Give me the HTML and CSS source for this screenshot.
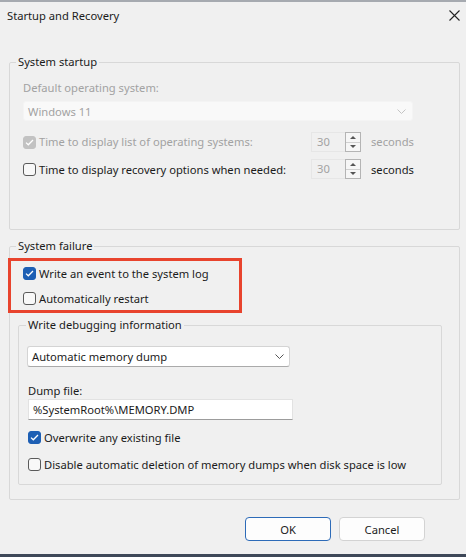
FILE: index.html
```html
<!DOCTYPE html>
<html>
<head>
    <title>Startup and Recovery</title>
    <link rel="stylesheet" href="styles.css">
</head>
<body>
    <div class="window">
        <div class="edge-top"></div>
        <div class="titlebar">
            <span>Startup and Recovery</span>
            <svg class="close" width="11" height="11" viewBox="0 0 11 11">
                <path d="M0.5 0.5 L10.5 10.5 M10.5 0.5 L0.5 10.5" stroke="#222" stroke-width="1.1" fill="none"/>
            </svg>
        </div>

        <div class="content">
            <fieldset class="group startup">
                <legend>System startup</legend>
                <div class="muted">Default operating system:</div>
                <div class="combo disabled">
                    <span>Windows 11</span>
                    <svg width="9" height="5" viewBox="0 0 9 5"><path d="M0.5 0.5 L4.5 4.5 L8.5 0.5" stroke="#c4c4c4" fill="none"/></svg>
                </div>
                <div class="spin-row first">
                    <label class="check muted">
                        <span class="box checked disabled"><svg width="9" height="7" viewBox="0 0 9 7"><path d="M1 3.6 L3.3 5.8 L8 1" stroke="#fff" stroke-width="1.3" fill="none"/></svg></span>
                        Time to display list of operating systems:
                    </label>
                    <span class="spin-value muted">30</span>
                    <span class="spin-buttons">
                        <span class="up"></span>
                        <span class="down"></span>
                    </span>
                    <span class="unit muted">seconds</span>
                </div>
                <div class="spin-row">
                    <label class="check">
                        <span class="box"></span>
                        Time to display recovery options when needed:
                    </label>
                    <span class="spin-value muted">30</span>
                    <span class="spin-buttons">
                        <span class="up"></span>
                        <span class="down"></span>
                    </span>
                    <span class="unit">seconds</span>
                </div>
            </fieldset>

            <fieldset class="group failure">
                <legend>System failure</legend>
                <label class="check row">
                    <span class="box checked"><svg width="9" height="7" viewBox="0 0 9 7"><path d="M1 3.6 L3.3 5.8 L8 1" stroke="#fff" stroke-width="1.3" fill="none"/></svg></span>
                    Write an event to the system log
                </label>
                <label class="check row second">
                    <span class="box"></span>
                    Automatically restart
                </label>

                <fieldset class="group debug">
                    <legend>Write debugging information</legend>
                    <div class="combo">
                        <span>Automatic memory dump</span>
                        <svg width="9" height="5" viewBox="0 0 9 5"><path d="M0.5 0.5 L4.5 4.5 L8.5 0.5" stroke="#555" fill="none"/></svg>
                    </div>
                    <div class="field-label">Dump file:</div>
                    <div class="textbox">%SystemRoot%\MEMORY.DMP</div>
                    <label class="check row overwrite">
                        <span class="box checked"><svg width="9" height="7" viewBox="0 0 9 7"><path d="M1 3.6 L3.3 5.8 L8 1" stroke="#fff" stroke-width="1.3" fill="none"/></svg></span>
                        Overwrite any existing file
                    </label>
                    <label class="check row second">
                        <span class="box"></span>
                        Disable automatic deletion of memory dumps when disk space is low
                    </label>
                </fieldset>
            </fieldset>

            <div class="actions">
                <button class="btn default">OK</button>
                <button class="btn">Cancel</button>
            </div>
        </div>

        <div class="edge-bottom"></div>

        <!-- highlight around the system log / restart options -->
        <div class="mark"></div>
    </div>
</body>
</html>
```

FILE: styles.css
```css
body { margin: 0; background: #f0f0f0; font-family: "Noto Sans", sans-serif; font-size: 11.2px; color: #1b1b1b; }
.window { position: relative; height: 557px; display: flex; flex-direction: column; overflow: hidden; }
.edge-top { height: 2px; background: #a6aab0; }
.edge-bottom { height: 3px; background: #3e4858; margin-top: auto; }

.titlebar { height: 30px; box-sizing: border-box; padding: 6px 6px 0 7px; line-height: 16px; display: flex; justify-content: space-between; }
.titlebar .close { margin-top: 2px; }

.content { padding-top: 22px; }

.group { margin: 0 6px 0 9px; padding: 10px 13px 49px; border: 1px solid #d8d8d8; border-radius: 2px; min-width: 0; }
.group legend { margin-left: -7px; padding: 0 2px; line-height: 16px; }
.failure { margin-top: 8px; padding: 9px 13px 14px; }
.debug { margin: 9px 4px 0 -5px; padding: 13px 8px 10px; }
.debug legend { margin-left: -1px; }

.muted { color: #a2a2a2; line-height: 16px; }

.combo { height: 20px; box-sizing: border-box; display: flex; align-items: center; justify-content: space-between; padding: 0 5px 0 4px; background: #fff; border: 1px solid #d4d4d4; border-bottom-color: #aaa; border-radius: 3px; width: 263px; }
.combo.disabled { margin-top: 5px; width: 390px; background: #f9f9f9; border-color: #f4f4f4; color: #a2a2a2; padding-right: 6px; }
.debug .combo { height: 21px; }

.check { display: flex; align-items: center; gap: 3px; white-space: nowrap; }
.box { width: 13px; height: 13px; box-sizing: border-box; border: 1px solid #5a5a5a; border-radius: 3px; background: #f8f8f8; display: flex; align-items: center; justify-content: center; flex: none; }
.box.checked { background: #1d5fb4; border-color: #1d5fb4; }
.box.checked.disabled { background: #c2c2c2; border-color: #c2c2c2; }

.spin-row { display: grid; grid-template-columns: 288px 34px 16px auto; align-items: center; height: 22px; margin-top: 5px; }
.spin-row.first { margin-top: 10px; }
.spin-value { height: 20px; box-sizing: border-box; border: 1px solid #e6e6e6; border-right: none; padding-left: 5px; line-height: 18px; }
.spin-buttons { height: 20px; box-sizing: border-box; border: 1px solid #b4b4b4; background: #f6f6f6; display: flex; flex-direction: column; }
.spin-buttons span { flex: 1; display: flex; align-items: center; justify-content: center; }
.spin-buttons .up { border-bottom: 1px solid #d0d0d0; }
.spin-buttons .up::before { content: ""; border: 3px solid transparent; border-top: none; border-bottom: 3px solid #555; }
.spin-buttons .down::before { content: ""; border: 3px solid transparent; border-bottom: none; border-top: 3px solid #555; }
.unit { margin-left: 10px; }

.row { height: 20px; }
.row.second { margin-top: 5px; }
.overwrite { margin-top: 7px; margin-left: 1px; }
.debug .row.second { margin-left: 1px; margin-top: 7px; }

.field-label { margin-top: 16px; line-height: 16px; margin-left: 1px; }
.textbox { margin-left: 1px; width: 265px; height: 21px; box-sizing: border-box; background: #fff; border: 1px solid #e2e2e2; border-bottom-color: #9c9c9c; padding-left: 4px; line-height: 19px; }

.actions { display: flex; justify-content: flex-end; gap: 8px; margin: 17px 41px 0 0; }
.btn { width: 86px; height: 24px; font: inherit; color: #1b1b1b; background: #fdfdfd; border: 1px solid #d3d3d3; border-radius: 4px; padding: 0; }
.btn.default { border-color: #2d6bb8; }

.mark { position: absolute; left: 8px; top: 258px; width: 234px; height: 55px; box-sizing: border-box; border: 3px solid #e8432d; }
```
